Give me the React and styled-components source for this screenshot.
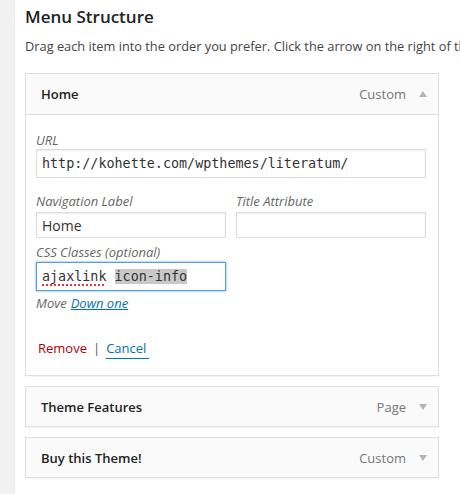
import React from "react";
import styled, { createGlobalStyle } from "styled-components";

const GlobalStyle = createGlobalStyle`
  html, body {
    margin: 0;
    padding: 0;
    background: #fff;
  }
  body {
    font-family: "Open Sans", "Noto Sans", sans-serif;
    color: #444;
    overflow: hidden;
  }
`;

const Page = styled.div`
  display: flex;
  min-height: 494px;
  width: 460px;
  overflow: hidden;
`;

const SideStrip = styled.div`
  flex: 0 0 14px;
  background: #f1f1f1;
  border-right: 1px solid #ececec;
`;

const Main = styled.div`
  flex: 1;
  min-width: 0;
  padding: 5px 0 0 10px;
`;

const Title = styled.h3`
  margin: 0;
  font-size: 17px;
  font-weight: 600;
  line-height: 23px;
  color: #222;
`;

const Description = styled.p`
  margin: 9px 0 0;
  font-size: 12.8px;
  line-height: 18px;
  color: #444;
  white-space: nowrap;
`;

const ItemList = styled.div`
  display: flex;
  flex-direction: column;
  gap: 10px;
  width: 414px;
  margin-top: 18px;
`;

const Item = styled.div`
  border: 1px solid #dfdfdf;
  background: #fff;
  box-shadow: 0 1px 1px rgba(0, 0, 0, 0.04);
`;

const ItemHeader = styled.div`
  display: flex;
  align-items: center;
  height: ${(p) => (p.open ? 40 : 39)}px;
  padding: 0 10px 0 15px;
  background: #fafafa;
  border-bottom: ${(p) => (p.open ? "1px solid #dfdfdf" : "none")};
`;

const ItemTitle = styled.span`
  flex: 1;
  font-size: 13px;
  font-weight: 600;
  color: #222;
`;

const ItemType = styled.span`
  font-size: 13px;
  color: #777;
`;

const Arrow = styled.span`
  display: inline-block;
  width: 0;
  height: 0;
  margin: 0 1px 0 13px;
  border-left: 4px solid transparent;
  border-right: 4px solid transparent;
  ${(p) =>
    p.up
      ? "border-bottom: 6px solid #b4b4b4;"
      : "border-top: 6px solid #b4b4b4;"}
`;

const Settings = styled.div`
  padding: 16px 12px 16px 10px;
`;

const FieldRow = styled.div`
  display: flex;
  gap: 10px;
  margin-top: ${(p) => p.top || 0}px;
`;

const Field = styled.label`
  display: flex;
  flex-direction: column;
  flex: ${(p) => (p.wide ? "1" : "0 0 190px")};
`;

const Label = styled.span`
  font-size: 13px;
  font-style: italic;
  line-height: 18px;
  color: #666;
  margin-bottom: ${(p) => p.gap || 0}px;
`;

const Input = styled.div`
  box-sizing: border-box;
  height: ${(p) => p.h || 26}px;
  display: flex;
  align-items: center;
  padding: 0 5px;
  border: 1px solid ${(p) => (p.focus ? "#5b9dd9" : "#ddd")};
  box-shadow: ${(p) =>
    p.focus ? "0 0 2px rgba(30, 140, 190, 0.8)" : "inset 0 1px 2px rgba(0,0,0,0.07)"};
  background: #fff;
  color: #333;
  font-size: ${(p) => (p.mono ? "13.4px" : "14px")};
  font-family: ${(p) =>
    p.mono ? '"DejaVu Sans Mono", monospace' : '"Open Sans", sans-serif'};
`;

const InputText = styled.span`
  white-space: pre;
`;

const Misspelled = styled.span`
  text-decoration: underline dotted #e0393e;
  text-underline-offset: 3px;
  text-decoration-thickness: 2px;
`;

const Selected = styled.span`
  background: #c8c8c8;
`;

const MoveLine = styled.div`
  font-size: 13px;
  font-style: italic;
  line-height: 18px;
  color: #666;
  margin-top: 3px;
`;

const Link = styled.a`
  color: #0073aa;
  text-decoration: underline;
  margin-left: 4px;
`;

const Actions = styled.div`
  margin-top: 27px;
  padding-left: 2px;
  font-size: 13px;
  line-height: 18px;
  color: #555;
  display: flex;
  align-items: baseline;
  gap: 6px;
`;

const Remove = styled.a`
  color: #a00;
`;

const Cancel = styled.a`
  color: #0073aa;
  border-bottom: 1px solid #0073aa;
  padding: 0 3px 1px 0;
`;

export default function App() {
  return (
    <>
      <GlobalStyle />
      <Page>
        <SideStrip />
        <Main>
          <Title>Menu Structure</Title>
          <Description>
            Drag each item into the order you prefer. Click the arrow on the right of the item to reveal additional configuration options.
          </Description>
          <ItemList>
            <Item>
              <ItemHeader open>
                <ItemTitle>Home</ItemTitle>
                <ItemType>Custom</ItemType>
                <Arrow up />
              </ItemHeader>
              <Settings>
                <FieldRow>
                  <Field wide>
                    <Label>URL</Label>
                    <Input h={29} mono>
                      <InputText>http://kohette.com/wpthemes/literatum/</InputText>
                    </Input>
                  </Field>
                </FieldRow>
                <FieldRow top={14}>
                  <Field>
                    <Label gap={2}>Navigation Label</Label>
                    <Input>
                      <InputText>Home</InputText>
                    </Input>
                  </Field>
                  <Field>
                    <Label gap={2}>Title Attribute</Label>
                    <Input />
                  </Field>
                </FieldRow>
                <FieldRow top={5}>
                  <Field>
                    <Label gap={1}>CSS Classes (optional)</Label>
                    <Input h={29} mono focus>
                      <InputText>
                        <Misspelled>ajaxlink</Misspelled>{" "}
                        <Selected>icon-info</Selected>
                      </InputText>
                    </Input>
                  </Field>
                </FieldRow>
                <MoveLine>
                  Move<Link>Down one</Link>
                </MoveLine>
                <Actions>
                  <Remove>Remove</Remove>
                  <span>|</span>
                  <Cancel>Cancel</Cancel>
                </Actions>
              </Settings>
            </Item>
            <Item>
              <ItemHeader>
                <ItemTitle>Theme Features</ItemTitle>
                <ItemType>Page</ItemType>
                <Arrow />
              </ItemHeader>
            </Item>
            <Item>
              <ItemHeader>
                <ItemTitle>Buy this Theme!</ItemTitle>
                <ItemType>Custom</ItemType>
                <Arrow />
              </ItemHeader>
            </Item>
          </ItemList>
        </Main>
      </Page>
    </>
  );
}
